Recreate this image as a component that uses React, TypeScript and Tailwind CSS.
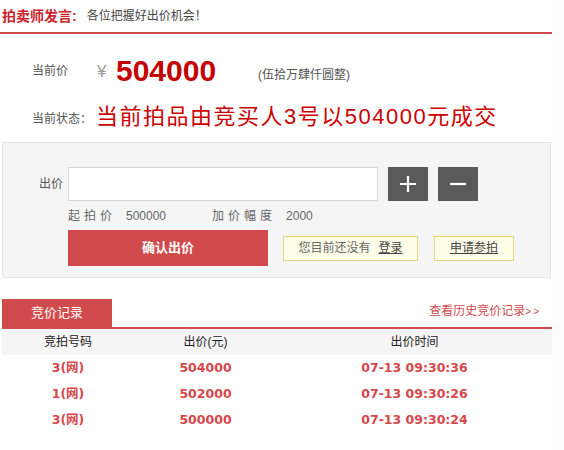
const font = "font-['Liberation_Sans','Noto_Sans_CJK_SC',sans-serif]";

const records = [
  { no: "3(网)", price: "504000", time: "07-13 09:30:36" },
  { no: "1(网)", price: "502000", time: "07-13 09:30:26" },
  { no: "3(网)", price: "500000", time: "07-13 09:30:24" },
];

export default function App() {
  return (
    <div className={`${font} w-[564px] h-[450px] bg-white flex`}>
      <div className="w-[552px] flex flex-col">
        {/* auctioneer message */}
        <div className="h-[34px] flex items-center border-b-2 border-[#d04a4e] px-[2px]">
          <span className="text-[14px] font-bold text-[#c9252c]">拍卖师发言:</span>
          <span className="ml-[10px] text-[12px] text-[#444]">各位把握好出价机会！</span>
        </div>

        {/* current price */}
        <div className="mt-[20px] h-[34px] flex items-center pl-[32px]">
          <span className="text-[12px] text-[#555] w-[65px]">当前价</span>
          <span className="text-[17px] text-[#999] w-[19px] mt-[2px]">¥</span>
          <span className="text-[30px] font-bold text-[#c40000] leading-none w-[142px]">504000</span>
          <span className="text-[12px] text-[#555] mt-[8px]">(伍拾万肆仟圆整)</span>
        </div>

        {/* status */}
        <div className="mt-[13px] h-[30px] flex items-center pl-[32px]">
          <span className="text-[12px] text-[#555] w-[64px] mt-[6px]">当前状态：</span>
          <span className="text-[22px] text-[#cc0000] tracking-[1.5px]">当前拍品由竞买人3号以504000元成交</span>
        </div>

        {/* bid box */}
        <div className="mt-[11px] ml-[2px] w-[549px] h-[136px] bg-[#f5f5f5] border border-[#e6e6e6] pt-[24px]">
          <div className="flex items-center h-[34px]">
            <span className="w-[60px] text-right text-[12px] text-[#555]">出价</span>
            <div className="ml-[5px] w-[310px] h-[34px] bg-white border border-[#d6d6d6]" />
            <button className="ml-[10px] w-[40px] h-[34px] bg-[#5a5a5a] flex items-center justify-center">
              <svg width="20" height="20" viewBox="0 0 20 20">
                <path d="M10 2v16M2 10h16" stroke="#fff" strokeWidth="2.2" />
              </svg>
            </button>
            <button className="ml-[10px] w-[40px] h-[34px] bg-[#5a5a5a] flex items-center justify-center">
              <svg width="20" height="20" viewBox="0 0 20 20">
                <path d="M2 10h16" stroke="#fff" strokeWidth="2.2" />
              </svg>
            </button>
          </div>
          <div className="mt-[7px] h-[16px] flex items-center pl-[65px] text-[12px] text-[#666]">
            <span className="tracking-[4px] w-[58px]">起拍价</span>
            <span>500000</span>
            <span className="ml-[46px] tracking-[4px] w-[74px]">加价幅度</span>
            <span>2000</span>
          </div>
          <div className="mt-[6px] h-[36px] flex items-center pl-[65px]">
            <button className="w-[200px] h-[36px] bg-[#d24b4c] text-white text-[13px] font-bold">确认出价</button>
            <div className="ml-[15px] w-[135px] h-[25px] bg-[#fffde8] border border-[#e6d483] flex items-center justify-center text-[12px] text-[#666]">
              您目前还没有
              <span className="ml-[8px] underline text-[#444]">登录</span>
            </div>
            <div className="ml-[16px] w-[80px] h-[25px] bg-[#fffde8] border border-[#e6d483] flex items-center justify-center text-[12px] text-[#444] underline">
              申请参拍
            </div>
          </div>
        </div>

        {/* records */}
        <div className="mt-[21px] ml-[2px] flex items-end justify-between border-b-2 border-[#d24b4c] h-[30px]">
          <div className="w-[110px] h-[28px] bg-[#d24b4c] text-white text-[13px] flex items-center justify-center">竞价记录</div>
          <span className="mb-[7px] mr-[11px] text-[12px] text-[#d04a4e]">
            查看历史竞价记录<span className="text-[10px] tracking-[2px]">&gt;&gt;</span>
          </span>
        </div>
        <div className="ml-[2px] grid grid-cols-[132px_143px_1fr]">
          <div className="contents text-[12px] text-[#222]">
            <div className="h-[26px] bg-[#f5f5f5] flex items-center justify-center">竞拍号码</div>
            <div className="h-[26px] bg-[#f5f5f5] flex items-center justify-center">出价(元)</div>
            <div className="h-[26px] bg-[#f5f5f5] flex items-center justify-center">出价时间</div>
          </div>
          {records.map((r, i) => (
            <div key={i} className="contents font-['DejaVu_Sans','Noto_Sans_CJK_SC',sans-serif] text-[12.5px] font-bold text-[#d8474b]">
              <div className="h-[26px] flex items-center justify-center pt-[1px]">{r.no}</div>
              <div className="h-[26px] flex items-center justify-center pt-[1px]">{r.price}</div>
              <div className="h-[26px] flex items-center justify-center pt-[1px]">{r.time}</div>
            </div>
          ))}
        </div>
      </div>
      <div className="flex-1 bg-[#fcfcfc]" />
    </div>
  );
}
